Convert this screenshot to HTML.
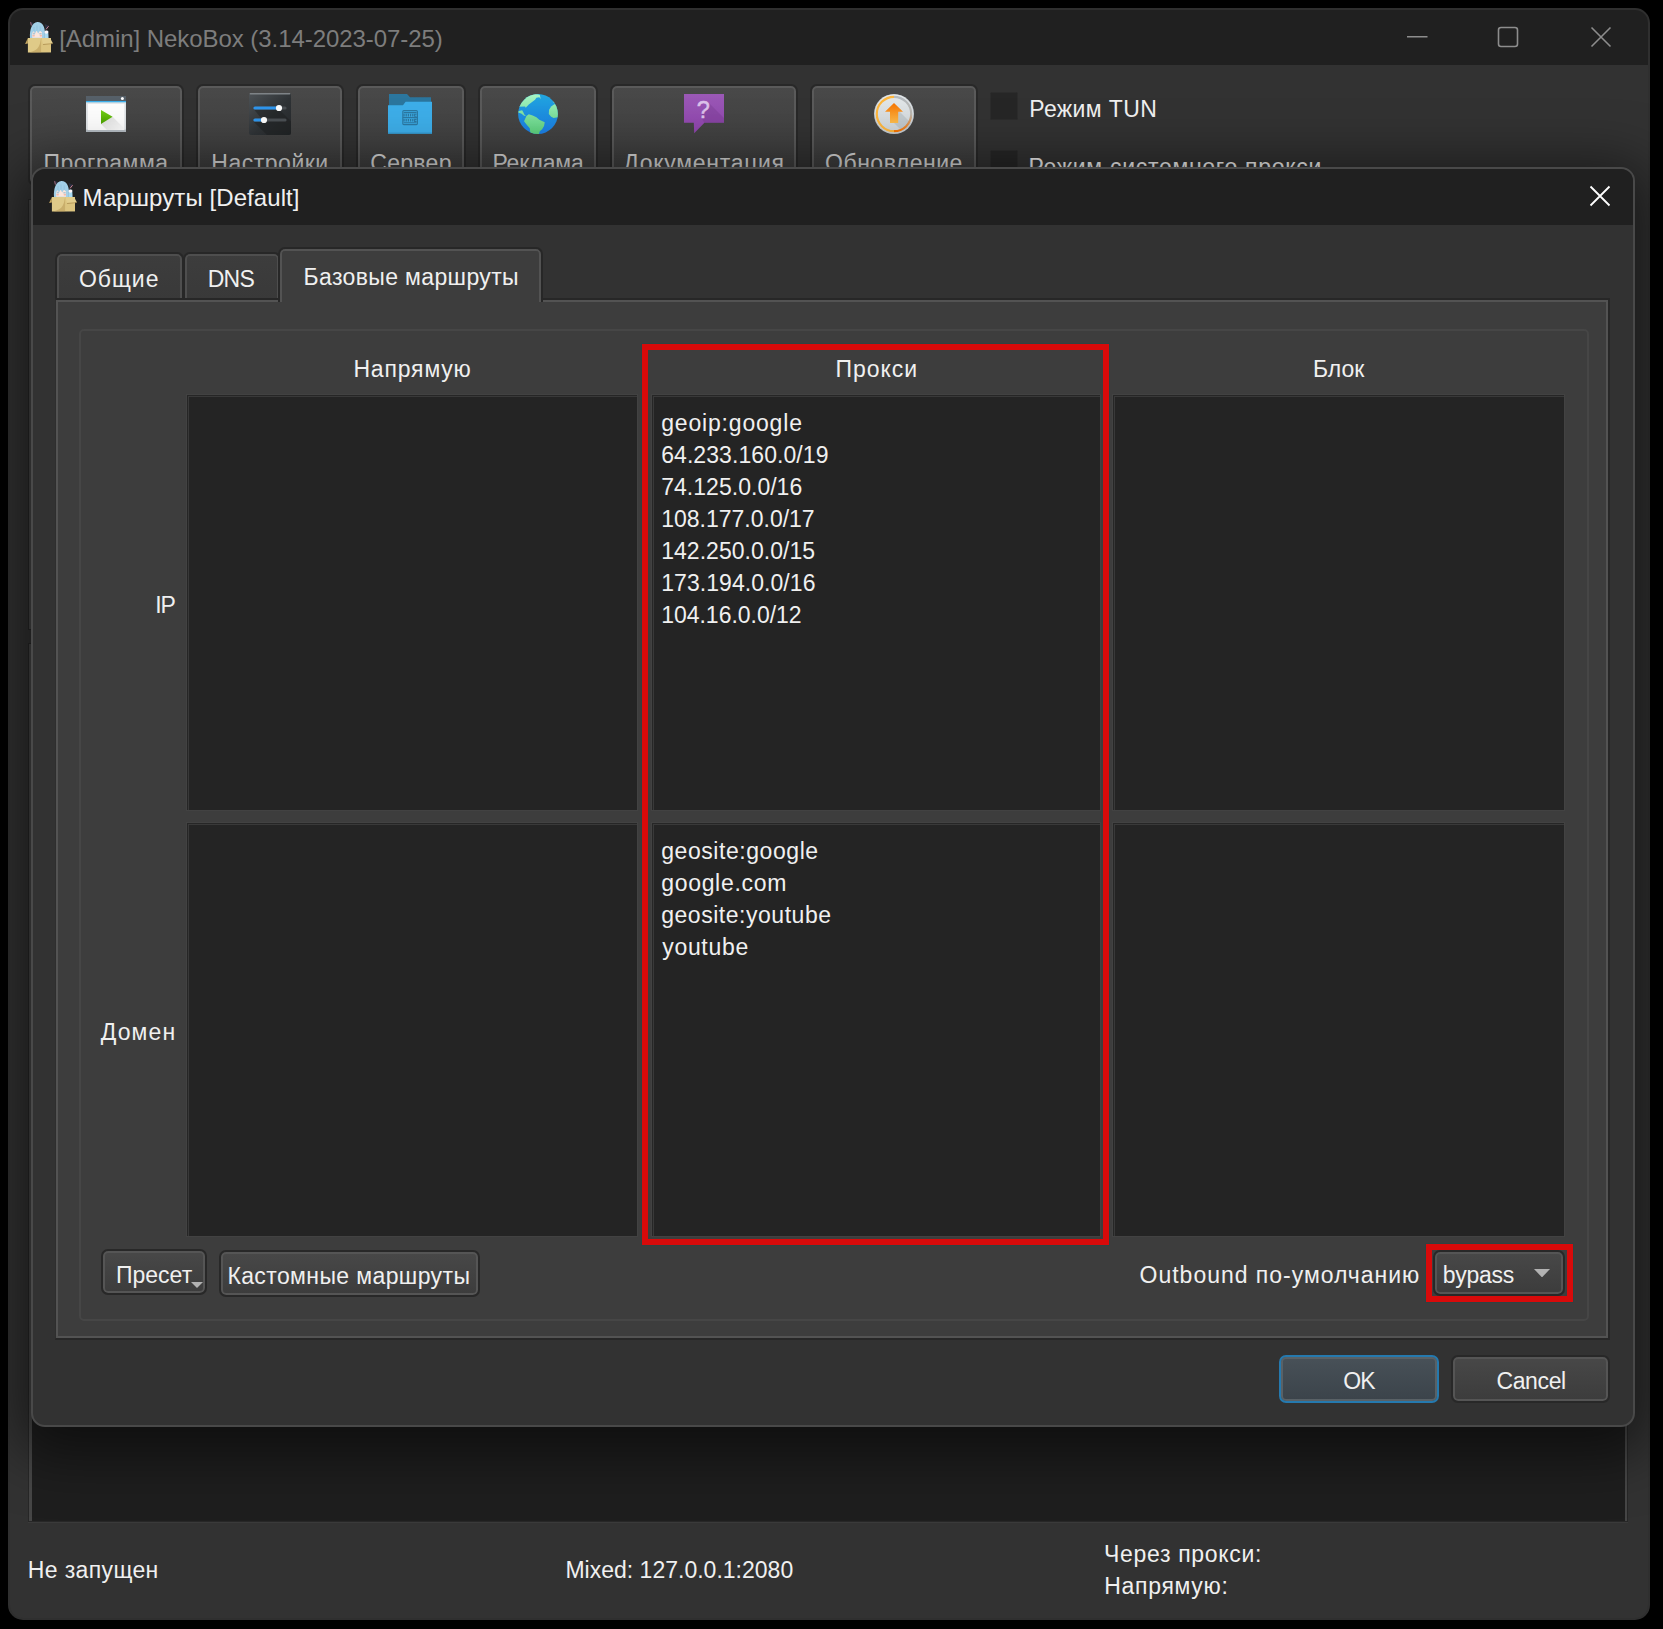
<!DOCTYPE html>
<html lang="ru">
<head>
<meta charset="utf-8">
<title>NekoBox</title>
<style>
*{box-sizing:border-box;margin:0;padding:0}
html,body{width:1663px;height:1629px;background:#000;overflow:hidden}
body{position:relative;font-family:"Liberation Sans",sans-serif;font-size:23px;color:#f0f0f0;line-height:32px}
.abs{position:absolute}
.t{position:absolute;white-space:nowrap;line-height:32px;height:32px}
#main{position:absolute;left:8px;top:8px;width:1642px;height:1612px;border-radius:15px;background:#323232;overflow:hidden;border:2px solid #2f2f2f}
#mtitle{position:absolute;background:#202020}
.tb{position:absolute;top:84px;height:102px;border:2px solid #282828;border-radius:7px;background:linear-gradient(#494949,#3b3b3b);box-shadow:inset 0 0 0 2px #5a5a5a}
.tb .t{color:#d8d8d8}
.chk{position:absolute;width:28px;height:28px;background:#262626;border:1px solid #2c2c2c;border-radius:2px}
#log{position:absolute;left:28px;top:643px;width:1599.5px;height:878.5px;background:#1e1e1e;border:1px solid #272727;box-shadow:inset 3px 0 0 0 #464646,inset -2px 0 0 0 #464646,0 1px 0 0 #3a3a3a}
#tbl{position:absolute;left:28px;top:199px;width:1599.5px;height:431px;background:#242424;border:1px solid #272727;box-shadow:inset 3px 0 0 0 #464646,inset -2px 0 0 0 #464646}
#dlg{position:absolute;left:31px;top:167px;width:1604px;height:1260px;border-radius:14px;background:#323232;overflow:hidden;border:2px solid #494949;box-shadow:0 12px 56px 14px rgba(0,0,0,.52)}
#dtitle{position:absolute;background:#202020}
.tab.act{background:#3d3d3d;box-shadow:inset 0 2px 0 0 #535353,inset 2px 0 0 0 #535353,inset -2px 0 0 0 #535353}
.btn.ok{border:2px solid #2579ae;background:linear-gradient(#485158,#3b434a);box-shadow:inset 0 0 0 2px #596166}
.tab{position:absolute;border:2px solid #272727;border-bottom:none;border-radius:7px 7px 0 0;background:linear-gradient(#3d3d3d,#393939);box-shadow:inset 0 2px 0 0 #4e4e4e,inset 2px 0 0 0 #4e4e4e,inset -2px 0 0 0 #4e4e4e}
#pane{position:absolute;left:55px;top:298px;width:1555px;height:1042px;background:#3d3d3d;border:2px solid #272727;border-left:1px solid #2e2e2e;box-shadow:inset 0 0 0 2px #535353}
#grp{position:absolute;left:78.5px;top:329px;width:1510.5px;height:992px;border:2px solid #464646;border-radius:5px}
.ed{position:absolute;background:#242424;border:1px solid #424242;box-shadow:inset 1px 1px 0 0 #262626,inset 2px 2px 0 0 #393939}
.red{position:absolute;border:6px solid #d80a0a;outline:1px solid rgba(40,70,70,.55)}
.btn{position:absolute;border:2px solid #282828;border-radius:7px;background:linear-gradient(#484848,#3c3c3c);box-shadow:inset 0 0 0 2px #555}
</style>
</head>
<body>
<div id="main">
  <div class="o" style="position:absolute;left:-10px;top:-10px;width:1663px;height:1629px">
  <div id="mtitle" style="left:9px;top:9px;width:1641px;height:56px"></div>
  <span class="t" id="t_title" style="left:59.2px;top:23px;color:#7d7d7d;font-size:24px;letter-spacing:-0.06px">[Admin] NekoBox (3.14-2023-07-25)</span>
  <!-- window controls -->
  <svg class="abs" style="left:1400px;top:20px" width="220" height="34" viewBox="0 0 220 34" fill="none" stroke="#8d8d8d" stroke-width="1.6">
    <path d="M7 16.8H27.5"/>
    <rect x="98.5" y="7.5" width="19" height="19" rx="2.5"/>
    <path d="M191.5 7.5L210.5 26.5M210.5 7.5L191.5 26.5"/>
  </svg>
  <!-- toolbar -->
  <div class="tb" style="left:28px;width:156px"><span class="t" id="tb1" style="left:0;width:152px;text-align:center;top:61px;letter-spacing:0.5px">Программа</span></div>
  <div class="tb" style="left:196px;width:148px"><span class="t" id="tb2" style="left:0;width:144px;text-align:center;top:61px;letter-spacing:0.5px">Настройки</span></div>
  <div class="tb" style="left:356px;width:110px"><span class="t" id="tb3" style="left:0;width:106px;text-align:center;top:61px;letter-spacing:0.3px">Сервер</span></div>
  <div class="tb" style="left:478px;width:120px"><span class="t" id="tb4" style="left:0;width:116px;text-align:center;top:61px;letter-spacing:-0.15px">Реклама</span></div>
  <div class="tb" style="left:610px;width:188px"><span class="t" id="tb5" style="left:0;width:184px;text-align:center;top:61px;letter-spacing:0.7px">Документация</span></div>
  <div class="tb" style="left:810px;width:168px"><span class="t" id="tb6" style="left:0;width:164px;text-align:center;top:61px;letter-spacing:0.5px">Обновление</span></div>

  <!-- icons -->
  <svg class="abs" style="left:86px;top:96px" width="40" height="36" viewBox="0 0 40 36">
    <defs><linearGradient id="gPlay" x1="0" y1="0" x2="0" y2="1"><stop offset="0" stop-color="#73d216"/><stop offset="1" stop-color="#4a9e00"/></linearGradient>
    <linearGradient id="gSh" x1="0" y1="0" x2="1" y2="1"><stop offset="0" stop-color="#000" stop-opacity=".14"/><stop offset="1" stop-color="#000" stop-opacity="0"/></linearGradient></defs>
    <rect x="0" y="0" width="40" height="36" fill="#dfe3e6"/>
    <rect x="0" y="33.6" width="40" height="2.4" fill="#b4bcc2"/>
    <rect x="1.8" y="7.8" width="36.6" height="26.2" fill="#fdfdfd"/>
    <rect x="0" y="0" width="40" height="5" fill="#566069"/>
    <rect x="0" y="5" width="40" height="1.3" fill="#3daee9"/>
    <circle cx="36.4" cy="2.6" r="1.5" fill="#fff"/>
    <path d="M15 28L26.6 20.8L38.4 32.6V34H21Z" fill="url(#gSh)"/>
    <path d="M15 14V28L26.6 20.8Z" fill="url(#gPlay)"/>
  </svg>
  <svg class="abs" style="left:249px;top:93px" width="42" height="42" viewBox="0 0 42 42">
    <defs><linearGradient id="gSet" x1="0" y1="0" x2="1" y2="1"><stop offset="0" stop-color="#4d5256"/><stop offset=".55" stop-color="#2f3336"/><stop offset="1" stop-color="#25282b"/></linearGradient></defs>
    <rect x="0" y="0" width="42" height="42" rx="2" fill="url(#gSet)"/>
    <rect x="0.6" y="0" width="40.8" height="1.6" rx=".8" fill="#7e8387"/>
    <path d="M5 16.4H30L42 28.4V40A2 2 0 0 1 40 42H18L5 29L15 28.6Z" fill="#1c1e20" opacity=".45"/>
    <rect x="4.4" y="13.4" width="33.2" height="3.2" rx="1.6" fill="#4a4f53"/>
    <rect x="4.4" y="25.4" width="33.2" height="3.2" rx="1.6" fill="#4a4f53"/>
    <rect x="4.4" y="13.4" width="26" height="3.2" rx="1.6" fill="#2e96ee"/>
    <rect x="4.4" y="25.4" width="11" height="3.2" rx="1.6" fill="#2e96ee"/>
    <circle cx="30" cy="15" r="3.1" fill="#fcfcfc"/>
    <circle cx="15" cy="27" r="3.1" fill="#fcfcfc"/>
  </svg>
  <svg class="abs" style="left:388px;top:93px" width="45" height="42" viewBox="0 0 45 42">
    <path d="M1 1H19L22 4.2H43V30H1Z" fill="#2b769e"/>
    <path d="M0 12.2H15L17.6 8.8H44V40.8H0Z" fill="#3daee9"/>
    <rect x="0" y="39.6" width="44" height="1.2" fill="#3595c8"/>
    <g fill="none" stroke="#2b78a2" stroke-width="1.1"><rect x="14.8" y="17.6" width="14.6" height="14" rx="1"/><path d="M14.8 24.6H29.4M15.6 19.6H28.6M15.6 29.8H28.6"/>
    <path d="M16 20.8V23.4M18.2 20.8V23.4M20.4 20.8V23.4M22.6 20.8V23.4M24.8 20.8V23.4M16 26V28.6M18.2 26V28.6M20.4 26V28.6M22.6 26V28.6M24.8 26V28.6" stroke-width="1.3"/><path d="M28.6 21.2H26.6V23.2H28.6M28.6 26.4H26.6V28.4H28.6"/></g>
  </svg>
  <svg class="abs" style="left:518px;top:94px" width="40" height="40" viewBox="0 0 40.2 40.4">
    <defs><linearGradient id="gSea" x1="0" y1="0" x2="0" y2="1"><stop offset="0" stop-color="#22a7e0"/><stop offset=".5" stop-color="#1d90e0"/><stop offset="1" stop-color="#1c7fe6"/></linearGradient>
    <linearGradient id="gLand" gradientUnits="userSpaceOnUse" x1="0" y1="0" x2="0" y2="40"><stop offset="0" stop-color="#a8f5c6"/><stop offset="1" stop-color="#5ccf7c"/></linearGradient>
    <clipPath id="cG"><circle cx="20.1" cy="20.2" r="20.1"/></clipPath></defs>
    <circle cx="20.1" cy="20.2" r="20.1" fill="url(#gSea)"/>
    <g clip-path="url(#cG)" fill="url(#gLand)">
      <path d="M0 13L7 12.5L7.7 13.9L10.8 10.6L17.1 5.8L18.5 3.8L21.4 3.4L22.8 5.1L21.9 0.7L17.6 0L11.3 0L4 4L0 9.6Z"/>
      <path d="M0 17.3L4.1 16.4L5.1 18.3L6.3 20.7L7.9 22.1L6 21.9L3.1 19.7L0 18.8Z"/>
      <path d="M8.4 22.1L10.8 20.4L14.7 21.6L18.5 23.6L21.4 26L26.9 28.6L26.2 32.2L24.3 35.6L21.9 37.5L20.9 41L16.6 41L12.3 39L11.8 34.6L8.9 31.3L6 27.4Z"/>
      <path d="M36.6 10.3L33.4 12.5L31.3 15.9L31 20.2L33.4 23.1L35.8 24.3L41 23.3L41 10Z"/>
      <path d="M35 7.6L36.4 9.2L37.6 9.4L36 7.2Z"/>
    </g>
  </svg>
  <svg class="abs" style="left:684px;top:94px" width="40" height="40" viewBox="0 0 40 40">
    <defs><linearGradient id="gPur" x1="0" y1="0" x2="0" y2="1"><stop offset="0" stop-color="#9b59b6"/><stop offset="1" stop-color="#8e44ad"/></linearGradient></defs>
    <path d="M0 0H40V28.8H20.4L10.2 39.2L9.8 28.8H0Z" fill="url(#gPur)"/>
    <path d="M24 8L40 24V28.8H20L17 22Z" fill="#6c3483" opacity=".28"/>
    <text x="19.2" y="23.8" font-family="Liberation Sans, sans-serif" font-size="23.5" text-anchor="middle" fill="#dcc2ea" stroke="#dcc2ea" stroke-width=".5">?</text>
  </svg>
  <svg class="abs" style="left:874px;top:94px" width="40" height="40" viewBox="0 0 40 40">
    <defs><linearGradient id="gArr" x1="0" y1="0" x2="0" y2="1"><stop offset="0" stop-color="#f67400"/><stop offset="1" stop-color="#fdbc4b"/></linearGradient>
    <linearGradient id="gRing" x1="0" y1="0" x2="0" y2="1"><stop offset="0" stop-color="#b4babf"/><stop offset=".5" stop-color="#b9b6b0"/><stop offset="1" stop-color="#f67400"/></linearGradient>
    <linearGradient id="gDisc" x1="0" y1="0" x2="0" y2="1"><stop offset="0" stop-color="#e4e8ea"/><stop offset="1" stop-color="#cfd5d9"/></linearGradient></defs>
    <circle cx="20" cy="20" r="20" fill="#c4cacf"/>
    <circle cx="20" cy="19.6" r="19.2" fill="url(#gDisc)"/>
    <path d="M16 25L24 16L37 29A19 19 0 0 1 28 37Z" fill="#9aa5ad" opacity=".35"/>
    <path d="M20 2.8A17.2 17.2 0 0 0 20 37.2" fill="none" stroke="#fdb63e" stroke-width="2.2"/>
    <path d="M20 2.8A17.2 17.2 0 0 1 20 37.2" fill="none" stroke="url(#gRing)" stroke-width="2.2"/>
    <path d="M20 9L29 17.8H24.2V29H16V17.8H11Z" fill="url(#gArr)"/>
  </svg>
<svg class="abs" style="left:24px;top:21px" width="30" height="33" viewBox="0 0 30 33">
  <path d="M6.4 0.5L10 2.3L7 5.2Z" fill="#2b2e3e"/><path d="M6.6 1.2L7.4 4.6" stroke="#d98a9c" stroke-width=".7"/>
  <path d="M20.6 3L25.1 4.7L21.9 8.9Z" fill="#2b2e3e"/><path d="M24.6 5.2L22 8.4" stroke="#d98a9c" stroke-width=".9"/>
  <path d="M20.6 9.8H24.2L24.6 17.2H20.6Z" fill="#a9daf2"/>
  <path d="M6 17.2C5.4 8.6 8 1.3 13.4 1.1C18.8 0.9 20.9 6.6 20.9 11.4V17.2Z" fill="#a2cfe7"/>
  <path d="M8.2 16.8V12L9.6 10.2L11 12.4L12.6 9.8L14.2 12.6L16 9.8L18 11.6V16.8Z" fill="#fbe6dd"/>
  <path d="M10 6V10M13 4.5V9.6M16.2 5.4V9.8" stroke="#8bbcd9" stroke-width=".6"/>
  <rect x="8.7" y="11.8" width="2.4" height="1.6" rx=".6" fill="#b4c6d2"/><rect x="15.3" y="12" width="2.4" height="1.6" rx=".6" fill="#b4c6d2"/>
  <rect x="8.3" y="14" width="2.6" height="1.5" rx=".7" fill="#f5b9ab"/><rect x="15.6" y="14" width="2.6" height="1.5" rx=".7" fill="#f5b9ab"/>
  <ellipse cx="22.4" cy="11.1" rx="1.9" ry="1.7" fill="#fdf6f8"/>
  <path d="M3.9 16.9H27V31.3L3.9 31.4Z" fill="#dfca88"/>
  <path d="M17.1 16.9H27V31.3H17.1Z" fill="#dcc47f"/>
  <path d="M3.9 31.4C10 31 15 28 16.2 21.5L17.1 16.9V31.4Z" fill="#c2a461" opacity=".75"/>
  <path d="M3.9 17.1L1.1 22.9L3.9 22.6Z" fill="#c8a961"/>
  <path d="M17.6 17L26 16.9L28.9 22.3L18.9 23Z" fill="#e2cd8d"/>
  <path d="M18.9 23L28.9 22.3L28.6 23L19.2 23.9Z" fill="#b59859"/>
</svg>
  <div class="chk" style="left:990px;top:92px"></div>
  <div class="chk" style="left:990px;top:150px"></div>
  <span class="t" id="t_tun" style="left:1029.2px;top:93px;letter-spacing:0.38px">Режим TUN</span>
  <span class="t" id="t_sys" style="left:1028.4px;top:151px;letter-spacing:0.71px">Режим системного прокси</span>
  <div id="tbl"></div>
  <div id="log"></div>
  <span class="t" id="t_st1" style="left:27.8px;top:1554px;letter-spacing:0.36px">Не запущен</span>
  <span class="t" id="t_st2" style="left:565.4px;top:1554px;letter-spacing:0.01px">Mixed: 127.0.0.1:2080</span>
  <span class="t" id="t_st3" style="left:1104.0px;top:1538px;letter-spacing:0.68px">Через прокси:</span>
  <span class="t" id="t_st4" style="left:1104.2px;top:1570px;letter-spacing:0.70px">Напрямую:</span>
  </div>
</div>
<div id="dlg">
  <div class="o" style="position:absolute;left:-33px;top:-169px;width:1663px;height:1629px">
  <div id="dtitle" style="left:33px;top:169px;width:1601px;height:56px"></div>
<svg class="abs" style="left:48px;top:180px" width="30" height="33" viewBox="0 0 30 33">
  <path d="M6.4 0.5L10 2.3L7 5.2Z" fill="#2b2e3e"/><path d="M6.6 1.2L7.4 4.6" stroke="#d98a9c" stroke-width=".7"/>
  <path d="M20.6 3L25.1 4.7L21.9 8.9Z" fill="#2b2e3e"/><path d="M24.6 5.2L22 8.4" stroke="#d98a9c" stroke-width=".9"/>
  <path d="M20.6 9.8H24.2L24.6 17.2H20.6Z" fill="#a9daf2"/>
  <path d="M6 17.2C5.4 8.6 8 1.3 13.4 1.1C18.8 0.9 20.9 6.6 20.9 11.4V17.2Z" fill="#a2cfe7"/>
  <path d="M8.2 16.8V12L9.6 10.2L11 12.4L12.6 9.8L14.2 12.6L16 9.8L18 11.6V16.8Z" fill="#fbe6dd"/>
  <path d="M10 6V10M13 4.5V9.6M16.2 5.4V9.8" stroke="#8bbcd9" stroke-width=".6"/>
  <rect x="8.7" y="11.8" width="2.4" height="1.6" rx=".6" fill="#b4c6d2"/><rect x="15.3" y="12" width="2.4" height="1.6" rx=".6" fill="#b4c6d2"/>
  <rect x="8.3" y="14" width="2.6" height="1.5" rx=".7" fill="#f5b9ab"/><rect x="15.6" y="14" width="2.6" height="1.5" rx=".7" fill="#f5b9ab"/>
  <ellipse cx="22.4" cy="11.1" rx="1.9" ry="1.7" fill="#fdf6f8"/>
  <path d="M3.9 16.9H27V31.3L3.9 31.4Z" fill="#dfca88"/>
  <path d="M17.1 16.9H27V31.3H17.1Z" fill="#dcc47f"/>
  <path d="M3.9 31.4C10 31 15 28 16.2 21.5L17.1 16.9V31.4Z" fill="#c2a461" opacity=".75"/>
  <path d="M3.9 17.1L1.1 22.9L3.9 22.6Z" fill="#c8a961"/>
  <path d="M17.6 17L26 16.9L28.9 22.3L18.9 23Z" fill="#e2cd8d"/>
  <path d="M18.9 23L28.9 22.3L28.6 23L19.2 23.9Z" fill="#b59859"/>
</svg>
  <span class="t" id="t_dtitle" style="left:82.6px;top:182px;font-size:24px;letter-spacing:0.08px">Маршруты [Default]</span>
  <svg class="abs" style="left:1588px;top:184px" width="24" height="24" viewBox="0 0 24 24" fill="none" stroke="#fff" stroke-width="1.8"><path d="M2.5 2.5L21.5 21.5M21.5 2.5L2.5 21.5"/></svg>
  <div class="tab" style="left:55px;top:252px;width:129px;height:47px"></div>
  <div class="tab" style="left:183px;top:252px;width:98px;height:47px"></div>
  <div id="pane"></div>
  <div class="tab act" style="left:278px;top:247px;width:265px;height:55px"></div>
  <span class="t" id="t_tab1" style="left:79.0px;top:263px;letter-spacing:0.96px">Общие</span>
  <span class="t" id="t_tab2" style="left:207.8px;top:263px;letter-spacing:-0.8px">DNS</span>
  <span class="t" id="t_tab3" style="left:303.6px;top:261px;letter-spacing:0.36px">Базовые маршруты</span>
  <div id="grp"></div>
  <span class="t" id="t_h1" style="left:353.4px;top:353px;letter-spacing:0.83px">Напрямую</span>
  <span class="t" id="t_h2" style="left:835.6px;top:353px;letter-spacing:0.96px">Прокси</span>
  <span class="t" id="t_h3" style="left:1313.0px;top:353px;letter-spacing:-0.00px">Блок</span>
  <span class="t" id="t_ip" style="left:155.2px;top:589px;letter-spacing:-1.2px">IP</span>
  <span class="t" id="t_dom" style="left:100.8px;top:1016px;letter-spacing:1.10px">Домен</span>
  <div class="ed" style="left:186px;top:394px;width:452px;height:417px"></div>
  <div class="ed" style="left:650.5px;top:394px;width:450.5px;height:417px"></div>
  <div class="ed" style="left:1112px;top:394px;width:452.5px;height:417px"></div>
  <div class="ed" style="left:186px;top:822px;width:452px;height:415px"></div>
  <div class="ed" style="left:650.5px;top:822px;width:450.5px;height:415px"></div>
  <div class="ed" style="left:1112px;top:822px;width:452.5px;height:415px"></div>
  <span class="t" id="ip0" style="left:661.2px;top:407px;letter-spacing:0.82px">geoip:google</span>
  <span class="t" id="ip1" style="left:661.2px;top:439px;letter-spacing:0.07px">64.233.160.0/19</span>
  <span class="t" id="ip2" style="left:661.2px;top:471px;letter-spacing:0.03px">74.125.0.0/16</span>
  <span class="t" id="ip3" style="left:661.2px;top:503px;letter-spacing:-0.00px">108.177.0.0/17</span>
  <span class="t" id="ip4" style="left:661.2px;top:535px;letter-spacing:0.03px">142.250.0.0/15</span>
  <span class="t" id="ip5" style="left:661.2px;top:567px;letter-spacing:0.06px">173.194.0.0/16</span>
  <span class="t" id="ip6" style="left:661.2px;top:599px;letter-spacing:-0.02px">104.16.0.0/12</span>
  <span class="t" id="dm0" style="left:661.2px;top:835px;letter-spacing:0.56px">geosite:google</span>
  <span class="t" id="dm1" style="left:661.2px;top:867px;letter-spacing:0.69px">google.com</span>
  <span class="t" id="dm2" style="left:661.2px;top:899px;letter-spacing:0.53px">geosite:youtube</span>
  <span class="t" id="dm3" style="left:662.2px;top:931px;letter-spacing:0.70px">youtube</span>
  
  <div class="red" style="left:642px;top:344px;width:467px;height:901px"></div>
  <div class="btn" style="left:101px;top:1249px;width:106px;height:46px"></div>
  <span class="t" id="t_b1" style="left:116px;top:1259px;letter-spacing:0px">Пресет</span>
  <svg class="abs" style="left:191px;top:1282px" width="12" height="6" viewBox="0 0 12 6"><path d="M0 0H12L6 6Z" fill="#b2b2b2"/></svg>
  <div class="btn" style="left:219px;top:1249.5px;width:260.5px;height:47px"></div>
  <span class="t" id="t_b2" style="left:227.4px;top:1260px;letter-spacing:0.39px">Кастомные маршруты</span>
  <span class="t" id="t_out" style="left:1139.6px;top:1259px;letter-spacing:0.98px">Outbound по-умолчанию</span>
  <div class="btn" style="left:1433px;top:1250px;width:132px;height:46px"></div>
  <span class="t" id="t_byp" style="left:1442.8px;top:1259px;letter-spacing:-0.28px">bypass</span>
  <svg class="abs" style="left:1534px;top:1269px" width="16" height="8.4" viewBox="0 0 16 8.4"><path d="M0 0H16L8 8.4Z" fill="#b2b2b2"/></svg>
  <div class="red" style="left:1426px;top:1244px;width:147px;height:58px"></div>
  <div class="btn ok" style="left:1279px;top:1355px;width:160px;height:48px"></div>
  <span class="t" id="t_ok" style="left:1343.2px;top:1365px;letter-spacing:-0.9px">OK</span>
  <div class="btn" style="left:1451px;top:1355px;width:159px;height:48px"></div>
  <span class="t" id="t_cancel" style="left:1496.4px;top:1365px;letter-spacing:-0.36px">Cancel</span>
  </div>
</div>
</body>
</html>
